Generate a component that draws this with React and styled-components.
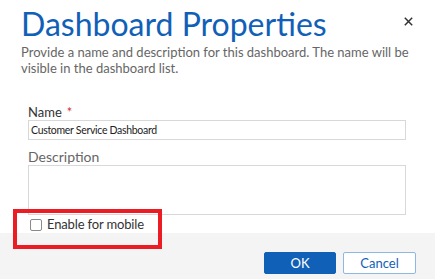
import React from 'react';
import styled, { createGlobalStyle } from 'styled-components';

const Global = createGlobalStyle`
  html, body {
    margin: 0;
    padding: 0;
    background: #ffffff;
    font-family: Lato, "Open Sans", sans-serif;
  }
`;

const Dialog = styled.div`
  position: relative;
  width: 435px;
  height: 279px;
  display: flex;
  flex-direction: column;
  overflow: hidden;
`;

const Body = styled.div`
  flex: 1;
  min-height: 0;
  padding: 8px 0 0 21px;
`;

const Header = styled.div`
  display: flex;
  align-items: flex-start;
  justify-content: space-between;
  padding-right: 22px;
`;

const Title = styled.h1`
  margin: 0;
  font-weight: 400;
  font-size: 32px;
  line-height: 32px;
  color: #1160b7;
`;

const Close = styled.button`
  border: 0;
  background: none;
  padding: 0;
  margin-top: 9px;
  width: 9px;
  height: 9px;
  display: flex;
  cursor: pointer;
`;

const Subtitle = styled.p`
  margin: 4px 0 0;
  width: 395px;
  font-size: 13px;
  line-height: 16px;
  color: #666666;
`;

const Form = styled.div`
  margin: 28px 0 0 7px;
  width: 378px;
  display: flex;
  flex-direction: column;
`;

const Label = styled.label`
  font-size: ${p => (p.muted ? '14px' : '13px')};
  line-height: ${p => (p.muted ? '17px' : '16px')};
  color: ${p => (p.muted ? '#666666' : '#333333')};
  margin-top: ${p => (p.muted ? '8px' : '0')};
`;

const Required = styled.span`
  color: #d13438;
  margin-left: 5px;
`;

const Input = styled.div`
  box-sizing: border-box;
  height: 20px;
  border: 1px solid #d8d8d8;
  padding: 1px 2px 0;
  font-size: 10.5px;
  letter-spacing: -0.3px;
  line-height: 17px;
  color: #222222;
`;

const TextArea = styled.div`
  box-sizing: border-box;
  height: 50px;
  border: 1px solid #d8d8d8;
`;

const CheckRow = styled.label`
  display: flex;
  align-items: center;
  gap: 5px;
  margin-top: 1px;
  margin-left: 2px;
  font-size: 13px;
  letter-spacing: -0.15px;
  line-height: 17px;
  color: #333333;
`;

const Box = styled.span`
  box-sizing: border-box;
  width: 12px;
  height: 12px;
  border: 1px solid #8a8a8a;
  border-radius: 2px;
  background: #fff;
`;

const Highlight = styled.div`
  position: absolute;
  left: 13px;
  top: 209px;
  width: 149px;
  height: 40px;
  box-sizing: border-box;
  border: 4px solid #ec1c24;
`;

const Footer = styled.div`
  height: 46px;
  flex-shrink: 0;
  background: #f4f4f4;
  display: flex;
  justify-content: flex-end;
  align-items: flex-start;
  gap: 7px;
  padding: 19px 19px 0 0;
  box-sizing: border-box;
`;

const Button = styled.button`
  box-sizing: border-box;
  width: ${p => (p.primary ? '72px' : '73px')};
  height: 22px;
  padding: 0;
  font-family: inherit;
  font-size: 13px;
  border-radius: 2px;
  border: 1px solid ${p => (p.primary ? '#1160b7' : '#8fb7e3')};
  background: ${p => (p.primary ? '#1160b7' : '#ffffff')};
  color: ${p => (p.primary ? '#ffffff' : '#1160b7')};
  cursor: pointer;
`;

export default function App() {
  return (
    <Dialog>
      <Global />
      <Body>
        <Header>
          <Title>Dashboard Properties</Title>
          <Close aria-label="Close">
            <svg width="9" height="9" viewBox="0 0 9 9">
              <path d="M0.8 0.8 L8.2 8.2 M8.2 0.8 L0.8 8.2" stroke="#333" strokeWidth="1.5" />
            </svg>
          </Close>
        </Header>
        <Subtitle>
          Provide a name and description for this dashboard. The name will be visible in the dashboard list.
        </Subtitle>
        <Form>
          <Label>
            Name<Required>*</Required>
          </Label>
          <Input>Customer Service Dashboard</Input>
          <Label muted>Description</Label>
          <TextArea />
          <CheckRow>
            <Box />
            Enable for mobile
          </CheckRow>
        </Form>
      </Body>
      <Footer>
        <Button primary>OK</Button>
        <Button>Cancel</Button>
      </Footer>
      <Highlight />
    </Dialog>
  );
}
